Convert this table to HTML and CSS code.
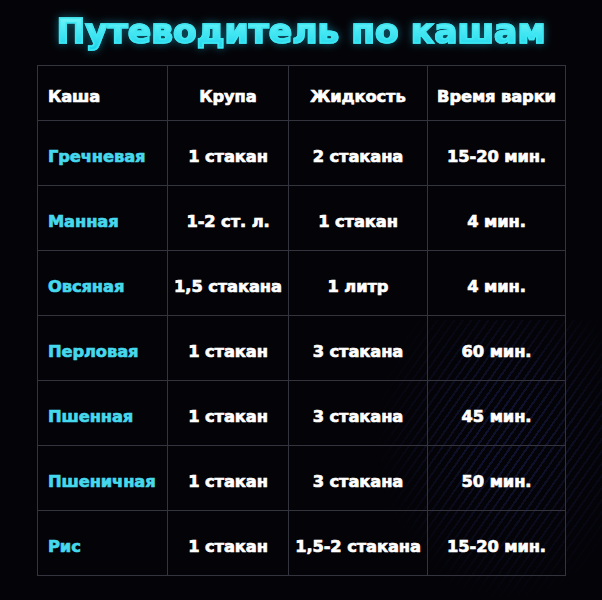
FILE: index.html
```html
<!DOCTYPE html>
<html lang="ru">
<head>
<meta charset="utf-8">
<link rel="stylesheet" href="styles.css">
</head>
<body>
<div class="page">
  <div class="deco"></div>
  <h1 class="title">Путеводитель по кашам</h1>
  <table class="guide">
    <colgroup>
      <col class="c1"><col class="c2"><col class="c3"><col class="c4">
    </colgroup>
    <thead>
      <tr><th class="name">Каша</th><th>Крупа</th><th>Жидкость</th><th>Время варки</th></tr>
    </thead>
    <tbody>
      <tr><td class="name">Гречневая</td><td>1 стакан</td><td>2 стакана</td><td>15-20 мин.</td></tr>
      <tr><td class="name">Манная</td><td>1-2 ст. л.</td><td>1 стакан</td><td>4 мин.</td></tr>
      <tr><td class="name">Овсяная</td><td>1,5 стакана</td><td>1 литр</td><td>4 мин.</td></tr>
      <tr><td class="name">Перловая</td><td>1 стакан</td><td>3 стакана</td><td>60 мин.</td></tr>
      <tr><td class="name">Пшенная</td><td>1 стакан</td><td>3 стакана</td><td>45 мин.</td></tr>
      <tr><td class="name">Пшеничная</td><td>1 стакан</td><td>3 стакана</td><td>50 мин.</td></tr>
      <tr><td class="name">Рис</td><td>1 стакан</td><td>1,5-2 стакана</td><td>15-20 мин.</td></tr>
    </tbody>
  </table>
</div>
</body>
</html>
```
FILE: styles.css
```css
html, body {
  margin: 0;
  padding: 0;
  background: #040408;
}
.page {
  position: relative;
  width: 602px;
  height: 600px;
  overflow: hidden;
  background: #040408;
  font-family: "DejaVu Sans", "Open Sans", "Liberation Sans", sans-serif;
}
.deco {
  position: absolute;
  left: 370px;
  top: 320px;
  width: 250px;
  height: 290px;
  background: repeating-linear-gradient(-55deg, rgba(45,55,150,0.28) 0 2px, transparent 2px 7px);
  -webkit-mask-image: radial-gradient(ellipse at 55% 40%, #000 15%, transparent 68%);
  mask-image: radial-gradient(ellipse at 55% 40%, #000 15%, transparent 68%);
}
.title {
  position: relative;
  margin: 0;
  height: 65px;
  display: flex;
  align-items: center;
  justify-content: center;
  padding-bottom: 3px;
  box-sizing: border-box;
  font-size: 34.5px;
  font-weight: 700;
  letter-spacing: 0;
  -webkit-text-stroke: 1.6px #3ee8f2;
  background: linear-gradient(180deg, #7afafa 20%, #14d2ec 80%);
  -webkit-background-clip: text;
  background-clip: text;
  color: transparent;
  filter: drop-shadow(0 0 4px rgba(30, 200, 240, 0.45));
}
.guide {
  position: relative;
  margin-left: 37px;
  width: 528px;
  border-collapse: collapse;
  table-layout: fixed;
  color: #ffffff;
  font-size: 16.3px;
  font-weight: 700;
  letter-spacing: -0.1px;
  -webkit-text-stroke: 0.7px currentColor;
}
.c1 { width: 130px; }
.c2 { width: 121px; }
.c3 { width: 139px; }
.c4 { width: 138px; }
.guide th, .guide td {
  border: 1px solid #34343f;
  text-align: center;
  padding: 6px 0 0 0;
  white-space: nowrap;
}
.guide th {
  height: 48px;
  font-weight: 700;
}
.guide td {
  height: 58px;
}
.guide .name {
  text-align: left;
  padding-left: 10px;
}
.guide td.name {
  color: #46d8ec;
}
```
